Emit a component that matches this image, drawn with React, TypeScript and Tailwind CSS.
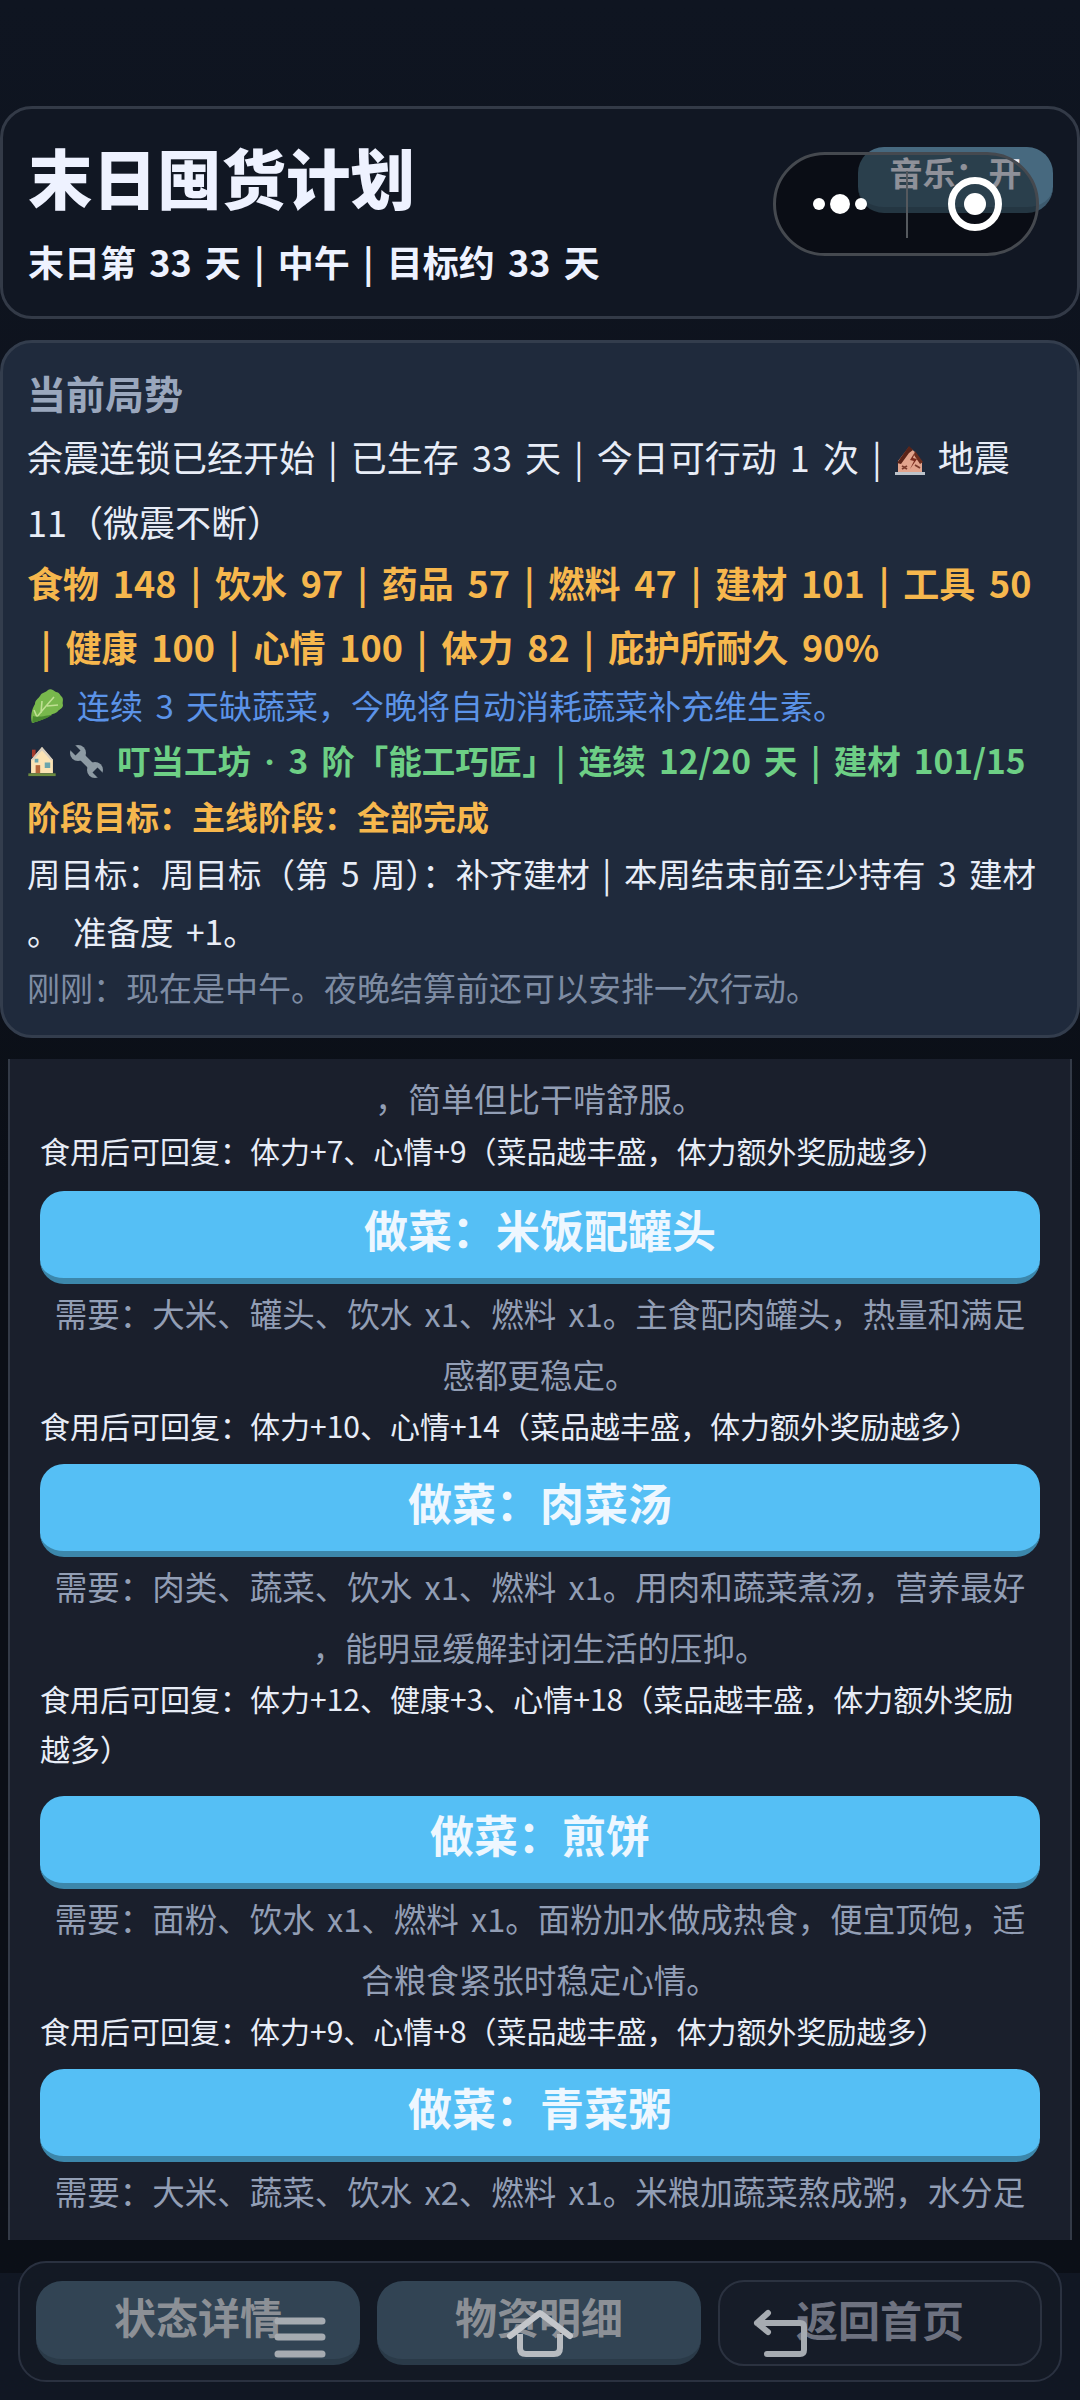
const FONT = "font-['Noto_Sans_CJK_SC','Noto_Sans',sans-serif]";

const dishes = [
  {
    name: "做菜：米饭配罐头",
    need: ["需要：大米、罐头、饮水 x1、燃料 x1。主食配肉罐头，热量和满足", "感都更稳定。"],
    gain: ["食用后可回复：体力+10、心情+14（菜品越丰盛，体力额外奖励越多）"],
    tail: "pb-0",
  },
  {
    name: "做菜：肉菜汤",
    need: ["需要：肉类、蔬菜、饮水 x1、燃料 x1。用肉和蔬菜煮汤，营养最好", "，能明显缓解封闭生活的压抑。"],
    gain: ["食用后可回复：体力+12、健康+3、心情+18（菜品越丰盛，体力额外奖励", "越多）"],
    tail: "pb-[9px]",
  },
  {
    name: "做菜：煎饼",
    need: ["需要：面粉、饮水 x1、燃料 x1。面粉加水做成热食，便宜顶饱，适", "合粮食紧张时稳定心情。"],
    gain: ["食用后可回复：体力+9、心情+8（菜品越丰盛，体力额外奖励越多）"],
    tail: "pb-0",
  },
  {
    name: "做菜：青菜粥",
    need: ["需要：大米、蔬菜、饮水 x2、燃料 x1。米粮加蔬菜熬成粥，水分足"],
    gain: [],
    tail: "pb-0",
  },
];

function RuinIcon() {
  return (
    <svg viewBox="0 0 30 31" className="inline-block w-[30px] h-[31px] align-[-4px]">
      <path d="M3 16 L14 2 L20 7 L27 17 V27 H3 Z" fill="#e2a48d" />
      <path d="M2 18 L14 1 L18 5 L14 8 L6 19 Z" fill="#5a2318" />
      <path d="M20 6 L28 17 L25 19 L19 10 Z" fill="#6b2c1e" />
      <path d="M20 7 L15 15 L19 16 L15 24 L22 14 L18 13 Z" fill="#7a2b1e" />
      <path d="M7 21 L12 24 M12 21 L7 24 M20 20 L25 23" stroke="#7a3b2c" strokeWidth="1.8" />
      <path d="M0 27 H30 V30 H0 Z" fill="#bcc3cb" />
    </svg>
  );
}

function LeafIcon() {
  return (
    <svg viewBox="0 0 34 36" className="inline-block w-[34px] h-[36px] shrink-0">
      <path d="M2 35 C0 28 2 21 5 16 C5 12 8 11 10 8 C12 4 15 5 18 2 C21 0 24 3 26 4 C29 4 30 7 32 9 C34 12 32 14 33 17 C33 20 30 21 28 23 C26 26 23 25 21 27 C15 31 9 33 2 35 Z" fill="#78b84c" />
      <path d="M3 34 C9 26 16 18 24 9 M11 25 L12 13 M17 18 L28 17 M7 29 L4 22" stroke="#bfe092" strokeWidth="1.6" fill="none" />
      <path d="M2 35 C9 33 16 31 22 27 C18 27 8 30 3 28 Z" fill="#4a8a30" />
    </svg>
  );
}

function HouseIcon() {
  return (
    <svg viewBox="0 0 30 34" className="inline-block w-[28px] h-[31px] shrink-0">
      <path d="M4 4 H8 V12 H4 Z" fill="#a33a2c" />
      <path d="M15 1 L27 15 V30 H3 V15 Z" fill="#fbe3b4" />
      <path d="M15 1 L27 15 L25 16 L15 5 L5 16 L3 15 Z" fill="#d8cfc0" />
      <path d="M8 21 H13 V30 H8 Z" fill="#b5653a" />
      <path d="M18 18 H24 V24 H18 Z M7 14 H11 V18 H7 Z" fill="#6aa5ad" />
      <path d="M0 30 H30 V33 H0 Z" fill="#6d8c3f" />
    </svg>
  );
}

function WrenchIcon() {
  return (
    <svg viewBox="0 0 33 33" className="inline-block w-[33px] h-[33px] shrink-0">
      <path d="M8 8 L25 25" stroke="#8d9aa3" strokeWidth="7" />
      <circle cx="8" cy="8" r="8" fill="#8d9aa3" />
      <circle cx="25" cy="25" r="8" fill="#8d9aa3" />
      <path d="M10.5 5.5 L5.5 10.5 L-4.5 0.5 L0.5 -4.5 Z" fill="#1f2a3c" />
      <path d="M22.5 27.5 L27.5 22.5 L37.5 32.5 L32.5 37.5 Z" fill="#1f2a3c" />
    </svg>
  );
}

function Capsule() {
  return (
    <div className="absolute left-[773px] top-[152px] w-[266px] h-[104px] rounded-full border-[3px] border-[#45494f] bg-[#000000]/40 flex items-center">
      <div className="w-[130px] flex items-center justify-center gap-[5px] pr-[3px]">
        <span className="w-[12px] h-[12px] rounded-full bg-white" />
        <span className="w-[20px] h-[20px] rounded-full bg-white" />
        <span className="w-[12px] h-[12px] rounded-full bg-white" />
      </div>
      <span className="w-[2px] h-[67px] bg-[#55595e]" />
      <div className="flex-1 flex items-center justify-center pl-[5px]">
        <span className="w-[54px] h-[54px] rounded-full border-[7px] border-white flex items-center justify-center">
          <span className="w-[22px] h-[22px] rounded-full bg-white" />
        </span>
      </div>
    </div>
  );
}

function NavBar() {
  return (
    <svg viewBox="0 0 1080 70" className="absolute left-0 top-[2300px] w-[1080px] h-[70px] pointer-events-none" fill="none">
      <path d="M278 21 H322 M278 37 H322 M278 54 H322" stroke="#a6abb1" strokeWidth="7" strokeLinecap="round" />
      <path d="M510 36 L540 13 L570 36" stroke="#c3c6ca" strokeWidth="6" strokeLinecap="round" strokeLinejoin="round" />
      <path d="M520 34 V48 Q520 54 526 54 H554 Q560 54 560 48 V34" stroke="#b8bcc1" strokeWidth="6" />
      <path d="M768 13 L757 23 L768 32 M757 23 H800 Q804 23 804 27 V50 Q804 54 800 54 H767" stroke="#a6abb1" strokeWidth="6" strokeLinecap="round" strokeLinejoin="round" />
    </svg>
  );
}

export default function App() {
  return (
    <div className={`${FONT} relative w-[1080px] h-[2400px] overflow-hidden bg-gradient-to-b from-[#0f1521] via-[#0b0f17] to-[#0b0f17] [word-spacing:5px]`}>
      <div className="pt-[106px] h-[2261px] flex flex-col">
        {/* header */}
        <div className="relative h-[213px] shrink-0 rounded-[32px] border-[3px] border-[#333a47] bg-[#111723] pl-[25px] pt-[23px]">
          <div className="text-[64.5px] leading-[88px] font-black text-[#eef2ff]">末日囤货计划</div>
          <div className="mt-[16px] text-[36px] leading-[50px] font-bold text-[#eef2ff]">末日第 33 天 | 中午 | 目标约 33 天</div>
          <div className="absolute left-[855px] top-[38px] w-[195px] h-[66px] rounded-[26px] bg-[#47697f] border-b-[6px] border-[#3d5a6e] flex items-center justify-center pb-[8px] text-[33px] font-bold text-[#eef2ff]">
            音乐：开
          </div>
        </div>

        {/* status card */}
        <div className="mt-[21px] h-[698px] shrink-0 rounded-[32px] border-[3px] border-[#333d4d] bg-[#1f2a3c] pl-[24px] pt-[24px]">
          <div className="text-[39px] leading-[50px] font-bold text-[#9aa7bd]">当前局势</div>
          <div className="mt-[7px] text-[36px] leading-[65px] text-[#e8edf7]">
            <div>余震连锁已经开始 | 已生存 33 天 | 今日可行动 1 次 | <RuinIcon /> 地震</div>
            <div>11（微震不断）</div>
          </div>
          <div className="-mt-[4px] text-[36px] leading-[64px] font-bold text-[#f6b74d] [word-spacing:5.7px]">
            <div>食物 148 | 饮水 97 | 药品 57 | 燃料 47 | 建材 101 | 工具 50</div>
            <div>&nbsp;| 健康 100 | 心情 100 | 体力 82 | 庇护所耐久 90%</div>
          </div>
          <div className="text-[33px] leading-[55px] text-[#5b93e8] flex items-center gap-[13px] pl-[3px]">
            <LeafIcon />
            <span>连续 3 天缺蔬菜，今晚将自动消耗蔬菜补充维生素。</span>
          </div>
          <div className="text-[33.5px] leading-[53px] font-bold text-[#6dcf85] flex items-center gap-[14px] pl-[1px] [word-spacing:5.5px]">
            <HouseIcon />
            <WrenchIcon />
            <span>叮当工坊 <span className="font-['Inter']">·</span> 3 阶「能工巧匠」| 连续 12/20 天 | 建材 101/15</span>
          </div>
          <div className="text-[33px] leading-[55px] font-bold text-[#f6b74d]">阶段目标：主线阶段：全部完成</div>
          <div className="text-[33.5px] leading-[58px] text-[#e8edf7]">
            <div>周目标：周目标（第 5 周）：补齐建材 | 本周结束前至少持有 3 建材</div>
            <div>。 准备度 +1。</div>
          </div>
          <div className="text-[33px] leading-[55px] text-[#7e8ca3]">刚刚：现在是中午。夜晚结算前还可以安排一次行动。</div>
        </div>

        {/* cooking list */}
        <div className="mt-[21px] mx-[8px] h-[1181px] shrink-0 overflow-hidden border-x-2 border-[#333a47] bg-[#1a1f2c] px-[30px] pt-[14px]">
          <div className="text-center text-[33px] leading-[50px] text-[#929eb5]">，简单但比干啃舒服。</div>
          <div className="text-[30px] leading-[50px] text-[#e8edf7] mt-[2px]">食用后可回复：体力+7、心情+9（菜品越丰盛，体力额外奖励越多）</div>
          {dishes.map((d) => (
            <div key={d.name} className={`pt-[16px] ${d.tail}`}>
              <div className="h-[93px] rounded-[24px] bg-[#55bff5] border-b-[6px] border-[#3c87ab] flex items-center justify-center pb-[11px] text-[44px] font-bold text-[#eef7ff]">
                {d.name}
              </div>
              <div className="-mt-[2px] text-center text-[32.5px] leading-[61px] text-[#929eb5]">
                {d.need.map((l) => (
                  <div key={l}>{l}</div>
                ))}
              </div>
              <div className="-mt-[4px] -mb-[2px] text-[30px] leading-[50px] text-[#e8edf7]">
                {d.gain.map((l) => (
                  <div key={l}>{l}</div>
                ))}
              </div>
            </div>
          ))}
        </div>
      </div>

      {/* bottom tabs */}
      <div className="absolute inset-x-0 top-[2273px] bottom-0 bg-[#111723]" />
      <div className="absolute left-[18px] top-[2261px] w-[1044px] h-[121px] rounded-[28px] border-2 border-[#2a3140] bg-[#131924] flex items-center gap-[17px] px-[16px] pt-[2px]">
        <div className="w-[324px] h-[84px] rounded-[26px] bg-[#324454] border-b-[6px] border-[#2a3a48] flex items-center justify-center pb-[8px] text-[42px] font-bold text-[#8c9096]">状态详情</div>
        <div className="w-[324px] h-[84px] rounded-[26px] bg-[#324454] border-b-[6px] border-[#2a3a48] flex items-center justify-center pb-[8px] text-[42px] font-bold text-[#8c9096]">物资明细</div>
        <div className="w-[324px] h-[86px] rounded-[26px] border-2 border-[#2b3240] bg-[#161c28] flex items-center justify-center pb-[8px] text-[42px] font-bold text-[#6e7280]">返回首页</div>
      </div>

      <Capsule />
      <NavBar />
    </div>
  );
}
